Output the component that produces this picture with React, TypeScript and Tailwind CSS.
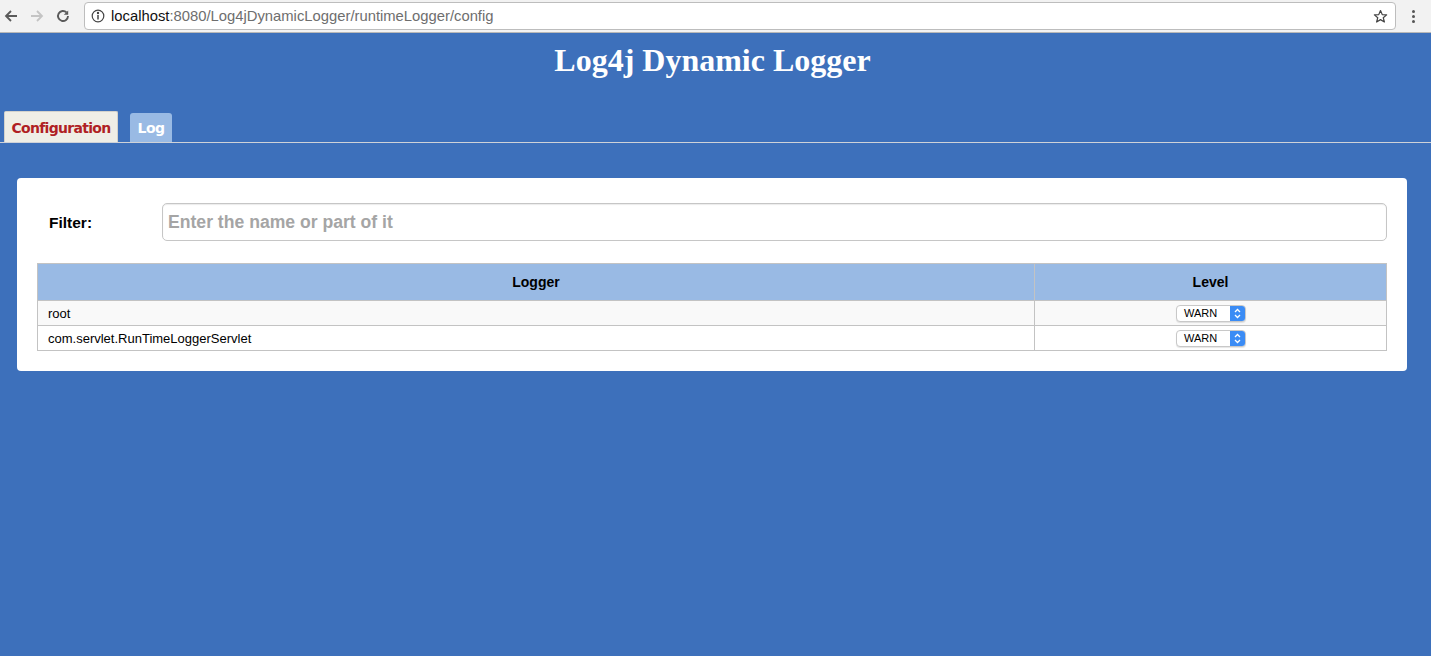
import React from "react";

function Select() {
  return (
    <div className="flex items-center h-[17px] w-[70px] rounded-[4px] border border-[#c8c8c8] bg-white overflow-hidden shadow-[0_1px_1px_rgba(0,0,0,0.1)]">
      <span className="flex-1 pl-[7px] text-[11px] leading-none text-black">WARN</span>
      <span className="w-[15px] h-full bg-[#3b8cf5] flex items-center justify-center">
        <svg width="7" height="11" viewBox="0 0 7 11" fill="none" stroke="white" strokeWidth="1.3">
          <path d="M1 4 L3.5 1.5 L6 4" />
          <path d="M1 7 L3.5 9.5 L6 7" />
        </svg>
      </span>
    </div>
  );
}

export default function App() {
  return (
    <div className="w-[1431px] h-[656px] bg-[#3d70bb] flex flex-col font-['Liberation_Sans',Arial,sans-serif] overflow-hidden">
      {/* Browser chrome */}
      <div className="h-[33px] bg-[#f2f2f2] border-b border-[#b8b8b8] flex items-center shrink-0">
        <div className="flex items-center gap-[10px] pl-[3px] w-[84px]">
          <svg width="16" height="16" viewBox="0 0 16 16" fill="none" stroke="#5a5a5a" strokeWidth="1.8">
            <path d="M14 8 H3 M8 3 L3 8 L8 13" />
          </svg>
          <svg width="16" height="16" viewBox="0 0 16 16" fill="none" stroke="#c4c4c4" strokeWidth="1.8">
            <path d="M2 8 H13 M8 3 L13 8 L8 13" />
          </svg>
          <svg width="16" height="16" viewBox="0 0 16 16" fill="none" stroke="#5a5a5a" strokeWidth="1.9">
            <path d="M13 8 A5 5 0 1 1 11.5 4.4" />
            <path d="M13.2 2.4 L13.2 6.8 L8.8 6.8 Z" fill="#5a5a5a" stroke="none" />
          </svg>
        </div>
        <div className="w-[1312px] h-[28px] bg-white border border-[#bdbdbd] rounded-[4px] flex items-center pl-[6px] pr-[7px]">
          <svg width="14" height="14" viewBox="0 0 14 14" fill="none" stroke="#444" strokeWidth="1.2">
            <circle cx="7" cy="7" r="5.8" />
            <path d="M7 6 V10.5" strokeWidth="1.5" />
            <circle cx="7" cy="4" r="0.6" fill="#444" />
          </svg>
          <span className="ml-[6px] text-[14.8px] text-[#111] font-['Liberation_Sans',Arial,sans-serif]">
            localhost<span className="text-[#6e6e6e]">:8080/Log4jDynamicLogger/runtimeLogger/config</span>
          </span>
          <span className="flex-1" />
          <svg width="15" height="15" viewBox="0 0 24 24" fill="none" stroke="#444" strokeWidth="2" strokeLinejoin="round">
            <path d="M12 2.5 L14.8 9 L21.8 9.4 L16.4 13.9 L18.2 20.8 L12 17 L5.8 20.8 L7.6 13.9 L2.2 9.4 L9.2 9 Z" />
          </svg>
        </div>
        <div className="flex-1 flex flex-col items-center gap-[2px]">
          <span className="w-[3px] h-[3px] rounded-full bg-[#555]" />
          <span className="w-[3px] h-[3px] rounded-full bg-[#555]" />
          <span className="w-[3px] h-[3px] rounded-full bg-[#555]" />
        </div>
      </div>

      {/* Title */}
      <h1 className="text-center text-white font-bold text-[32px] leading-none font-['Liberation_Serif','Times_New_Roman',serif] pt-[11px] pr-[6px] h-[79px] shrink-0">
        Log4j Dynamic Logger
      </h1>

      {/* Tabs */}
      <div className="flex items-end h-[31px] border-b border-[#cfd2d8] pl-[4px] gap-[12px] shrink-0">
        <div className="h-[31px] w-[114px] bg-[#efeee6] border border-[#d3d2cc] border-b-0 rounded-t-[2px] flex items-center justify-center pt-[2px] text-[#b01f24] font-bold text-[14px] font-['DejaVu_Sans',Verdana,sans-serif] tracking-[-0.7px]">
          Configuration
        </div>
        <div className="h-[29px] w-[42px] bg-[#99bae4] rounded-t-[3px] flex items-center justify-center pt-[2px] text-white font-bold text-[14px] font-['DejaVu_Sans',Verdana,sans-serif] tracking-[-0.6px]">
          Log
        </div>
      </div>

      {/* Card */}
      <div className="mx-[17px] mt-[35px] w-[1390px] bg-white rounded-[4px] pt-[25px] pb-[20px] px-[20px]">
        <div className="flex items-center h-[38px]">
          <label className="w-[125px] pl-[12px] pt-[2px] text-[15.5px] font-bold text-black">Filter:</label>
          <div className="flex-1 h-[38px] border border-[#c6c6c6] rounded-[5px] flex items-center pl-[5px] pt-[1px] shadow-[inset_0_1px_1px_rgba(0,0,0,0.08)]">
            <span className="text-[17.6px] font-bold text-[#a5a5a5]">Enter the name or part of it</span>
          </div>
        </div>
        <table className="mt-[22px] w-[1350px] border-collapse text-[13px] text-black">
          <thead>
            <tr className="bg-[#99bae4] h-[37px]">
              <th className="border border-[#c3c3c3] font-bold text-[14px] w-[997px]">Logger</th>
              <th className="border border-[#c3c3c3] font-bold text-[14px]">Level</th>
            </tr>
          </thead>
          <tbody>
            <tr className="bg-[#f9f9f9] h-[25px]">
              <td className="border border-[#c3c3c3] pl-[10px] pt-[1px]">root</td>
              <td className="border border-[#c3c3c3]">
                <div className="flex justify-center pl-[1px]"><Select /></div>
              </td>
            </tr>
            <tr className="bg-white h-[25px]">
              <td className="border border-[#c3c3c3] pl-[10px] pt-[1px]">com.servlet.RunTimeLoggerServlet</td>
              <td className="border border-[#c3c3c3]">
                <div className="flex justify-center pl-[1px]"><Select /></div>
              </td>
            </tr>
          </tbody>
        </table>
      </div>
    </div>
  );
}
